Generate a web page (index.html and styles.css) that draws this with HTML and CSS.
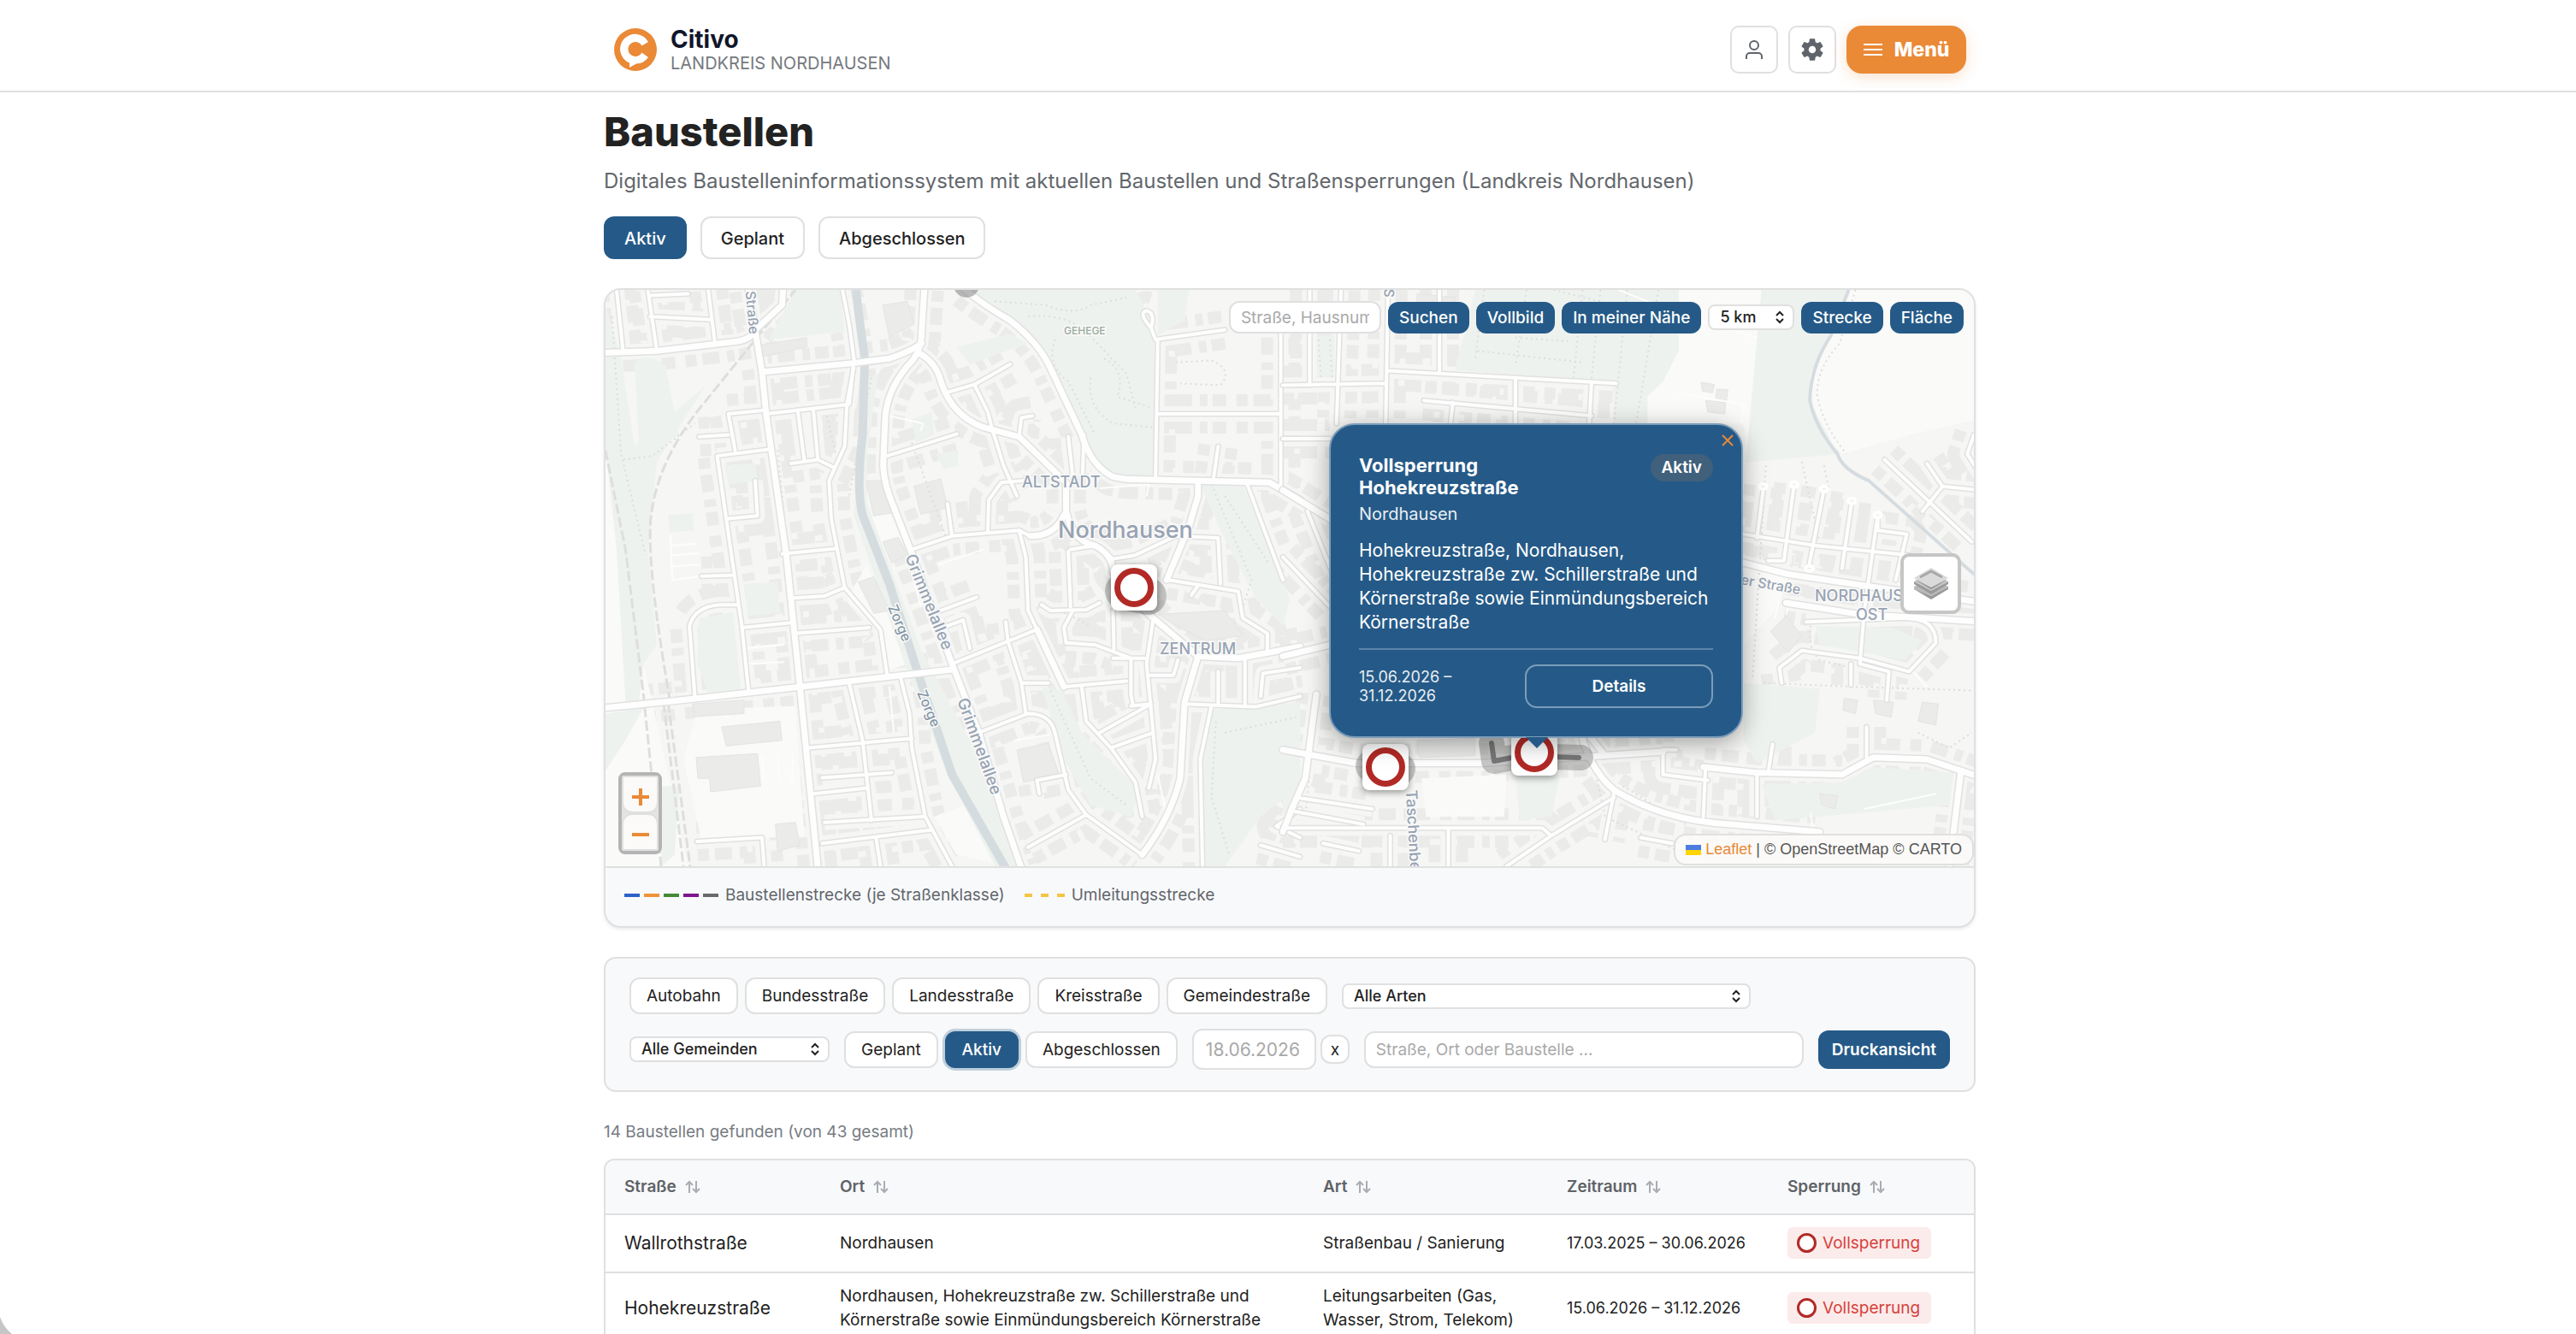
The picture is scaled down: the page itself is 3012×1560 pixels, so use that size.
FILE: index.html
```html
<!DOCTYPE html>
<html lang="de">
<head>
<meta charset="utf-8">
<meta name="viewport" content="width=device-width, initial-scale=1">
<title>Baustellen – Citivo Landkreis Nordhausen</title>
<link rel="stylesheet" href="styles.css">
</head>
<body>
<header class="site-header">
  <div class="header-inner">
    <a class="brand" href="#">
      <svg class="brand-logo" viewBox="0 0 50 50" aria-hidden="true">
        <circle cx="25" cy="25" r="25" fill="#ea8936"/>
        <path d="M40 16 A17.500 17.500 0 1 0 18 40.500 V46 L26 41.500 A17.500 17.500 0 0 0 40 34 L32.500 28.500 A8.500 8.500 0 1 1 32.500 20.500 Z" fill="#fff"/>
      </svg>
      <span class="brand-text">
        <span class="brand-name">Citivo</span>
        <span class="brand-sub">LANDKREIS NORDHAUSEN</span>
      </span>
    </a>
    <div class="header-actions">
      <button class="icon-btn" aria-label="Anmelden">
        <svg width="24" height="26" viewBox="0 0 24 26" fill="none" stroke="#5f656b" stroke-width="2"><circle cx="12" cy="8" r="5"/><path d="M3 24v-3a4 4 0 0 1 4-4h10a4 4 0 0 1 4 4v3"/></svg>
      </button>
      <button class="icon-btn" aria-label="Einstellungen">
        <svg width="32" height="32" viewBox="0 0 24 24" fill="#5f656b"><path d="M19.140 12.940c.04-.3.060-.61.060-.94s-.020-.64-.070-.94l2.030-1.580a.49.49 0 0 0 .12-.61l-1.920-3.320a.49.49 0 0 0-.59-.22l-2.390.96a7 7 0 0 0-1.620-.94l-.36-2.540a.48.48 0 0 0-.48-.41h-3.840a.48.48 0 0 0-.47.41l-.36 2.540a7.400 7.400 0 0 0-1.620.94l-2.390-.96a.48.48 0 0 0-.59.22L2.740 8.870a.48.48 0 0 0 .12.610l2.030 1.580a6 6 0 0 0 0 1.880l-2.030 1.580a.49.49 0 0 0-.12.610l1.920 3.320c.12.220.37.290.59.220l2.390-.96c.5.380 1.030.7 1.620.94l.36 2.540c.05.240.24.410.48.410h3.840c.24 0 .44-.17.470-.41l.36-2.540a7.400 7.400 0 0 0 1.620-.94l2.390.96c.22.080.47 0 .59-.22l1.920-3.320a.48.48 0 0 0-.12-.61zM12 15.200a3.200 3.200 0 1 1 0-6.400 3.200 3.200 0 0 1 0 6.400z"/></svg>
      </button>
      <button class="menu-btn">
        <svg width="22" height="16" viewBox="0 0 22 16" stroke="#fff" stroke-width="2"><path d="M0 2h22M0 8h22M0 14h22"/></svg>
        Menü
      </button>
    </div>
  </div>
</header>

<main class="page">
  <h1>Baustellen</h1>
  <p class="lead">Digitales Baustelleninformationssystem mit aktuellen Baustellen und Straßensperrungen (Landkreis Nordhausen)</p>
  <nav class="tabs">
    <a class="tab active" href="#">Aktiv</a>
    <a class="tab" href="#">Geplant</a>
    <a class="tab" href="#">Abgeschlossen</a>
  </nav>

  <section class="map-card">
    <div class="map">
      <svg class="tiles" viewBox="0 0 1600 674" preserveAspectRatio="xMidYMid slice" aria-hidden="true">
        <defs>
          <!-- west half, streets with houses on both sides -->
          <g id="west">
            <path d="M40 20 55 185M110 20 130 180M115 90 250 98M115 35 200 30M245 20 260 160"/>
            <path d="M290 345 305 440M225 405 290 400M265 455 380 438M265 455 300 740 320 900 335 1070M290 345 375 335M375 345 560 320 570 212"/>
            <path d="M445 335 460 470M480 335 490 465M430 475 490 465 525 485"/>
            <path d="M545 20 560 110 572 212M570 225 555 320 550 430 515 520 520 620 550 800 630 910 645 1030"/>
            <path d="M285 620 355 612 350 520M410 712 530 698M430 828 505 822 550 800M320 905 430 892M435 920 605 905"/>
            <path d="M215 1085 203 900Q215 850 270 845H310M230 770 297 768"/>
            <path d="M675 1035 695 1130 700 1220 730 1400 790 1530M470 1220 700 1195M560 1050 590 1200 610 1410M480 1340 600 1325M500 1298 655 1285M505 1415 725 1400M500 1470 745 1435M620 1455 630 1530M220 1465 365 1455 370 1530"/>
            <path d="M645 455 700 435 800 398M700 700 790 665 940 650 965 665M790 665 780 580M870 655 872 570 900 525 950 520M880 385 905 480 935 560"/>
            <path d="M775 290 840 268 920 215M840 268 870 340 880 385M940 405 945 355 970 350M1050 405 1060 510M1085 400 1082 500"/>
            <path d="M940 650 955 720 960 860 980 910M790 1000 980 910M765 860 845 825M780 900 815 885 830 960M910 890 915 940 945 1050 1005 1050M945 1050 955 1130"/>
            <path d="M850 1180 960 1130Q1010 1130 1020 1180L1050 1330 1090 1395M985 1340 980 1305 1045 1290M960 1480 1090 1395 1215 1500"/>
            <path d="M1050 705 1055 850M1055 700 1110 690 1150 725 1200 715 1290 665 1385 670 1390 790M1275 780 1430 810 1440 880 1495 920 1495 970M1325 820 1340 795"/>
            <path d="M990 845 1010 860 1090 858 1120 840M1045 945 1040 905 1060 860M1045 945 1110 950 1190 985 1190 1080 1195 1110M1150 860 1152 960M1240 880 1225 1000 1235 1120 1245 1250 1230 1325M1150 985H1220M1190 1110 1235 1105 1120 1180"/>
            <path d="M1040 1060 1180 1045M1080 1060 1090 1150 1145 1220 1200 1310 1215 1400M1145 1220 1240 1180M1230 1030H1285L1295 990"/>
            <path d="M1385 1020V1105M1445 990V1110M1310 1105 1470 1112 1568 1085M1480 1085 1485 1025 1568 1010M1370 1110 1345 1250 1350 1530M1568 1380 1515 1425 1568 1455M1480 1475 1568 1505"/>
            <path d="M1245 150 1400 125M1250 150 1245 510M1250 345H1525M1525 100V540M1525 270H1568M1530 410H1568M1385 430 1375 510M1450 530 1530 780M1245 150 1235 120Q1205 80 1225 75 1245 80 1235 120"/>
          </g>
          <g id="west-main">
            <path d="M728 20 722 130Q722 185 690 220 640 290 640 370L636 480Q638 530 660 590L700 710 790 1000 850 1180 905 1400 945 1535"/>
            <path d="M365 235 570 212 650 200Q700 180 722 160"/>
            <path d="M335 20 365 235 375 350 420 720 450 1060 490 1535"/>
            <path d="M15 185 130 180 310 155Q340 150 350 125L410 60 412 20M15 1115 160 1098 450 1060 790 1015"/>
            <path d="M820 20Q860 60 920 100 985 160 1010 225L1080 400Q1100 480 1150 510L1180 516 1500 525 1568 570"/>
            <path d="M715 185Q755 210 765 260 790 350 860 380L940 405 1045 525V600Q1060 680 1110 690 1150 715 1150 760L1230 870 1340 980 1430 985 1568 955"/>
            <path d="M1340 520V560L1320 640 1270 780M1340 980 1310 1100 1300 1300Q1280 1400 1215 1500M965 665Q1020 665 1040 610M980 910 1040 1060"/>
          </g>
          <!-- east half -->
          <g id="east">
            <path d="M0 270 230 265M130 20 120 370M235 20 230 370M235 232 745 265M315 310 690 350M350 20V235M380 315 375 370M520 250V370M690 265 685 370M0 410H105"/>
            <path d="M55 600 110 760M0 720 105 850M60 20V270"/>
            <path d="M1030 660 1190 690 1400 715M1075 535 1060 670M1143 530 1120 730H1085M1210 542 1175 750M1272 573 1250 750M1330 610V650L1395 660 1370 780M1330 610 1300 860 1290 1000 1355 1020 1350 1095"/>
            <path d="M1545 400 1530 450 1568 520M1345 465 1540 680M1430 600 1475 535 1560 545M1440 475 1475 535M1270 1055V1000"/>
            <path d="M1115 1050 1110 1010 1160 965 1290 985 1400 1020 1460 945Q1460 880 1390 880L1170 890"/>
            <path d="M1305 1165V1245M1095 1210 1085 1285M940 1400 945 1270M850 1225H880M850 1225V1290L950 1305M370 1430V1530M240 1450V1530M740 1340 720 1460M1060 1285V1400M30 1350 200 1380M20 1385 180 1420M90 1470 170 1490"/>
            <path d="M0 1430 580 1430 600 1450 500 1530M600 1450 740 1350M800 1455 870 1470"/>
          </g>
          <g id="east-main">
            <path d="M1030 735 1130 765 1330 800 1568 840M1125 840 1290 870 1568 890"/>
            <path d="M0 545 105 620M0 980 105 950M0 1225 165 1260 440 1260 720 1240M75 1080 50 1300 20 1380 0 1440"/>
            <path d="M1060 1285 1250 1290 1320 1245 1440 1250 1568 1300M1515 1290 1490 1530M940 1270 1060 1285"/>
            <path d="M660 1150Q680 1270 740 1330 850 1410 1000 1420L1200 1440M660 1150 720 1240 850 1230"/>
          </g>
        </defs>
        <rect width="1600" height="674" fill="#f6f6f4"/>
        <g transform="matrix(.523 0 0 .4464 -8 -9)">
          <use href="#west" class="houses"/><use href="#west-main" class="houses"/>
          <use href="#west" class="yard"/><use href="#west-main" class="yard"/>
        </g>
        <g transform="matrix(.523 0 0 .4464 792 -9)">
          <use href="#east" class="houses"/><use href="#east-main" class="houses"/>
          <use href="#east" class="yard"/><use href="#east-main" class="yard"/>
        </g>

        <g transform="matrix(.523 0 0 .4464 -8 -9)">
          <g class="open">
            <path d="M15 440 40 560 100 1000 120 1100 200 1535 15 1535ZM220 1120 440 1110 460 1450 230 1465 190 1250ZM560 820 600 740 640 850 690 1000 640 1020 630 920 560 840ZM610 615 650 605 680 680 630 690ZM750 1400 820 1370 880 1520 800 1500Z"/>
            <path d="M1440 1215 1540 1240 1520 1350 1430 1310Z"/>
          </g>
          <g class="park">
            <path d="M15 60 50 200 80 430 240 270 130 470 110 700 130 950 100 1000 90 1100 60 1100 40 700 15 430ZM380 150 440 20 540 20 550 130Z"/>
            <path d="M80 210Q110 180 150 220L180 405 90 420ZM325 790 400 785 405 865 335 875ZM225 880 300 865 318 1065 245 1075 220 1000ZM155 610 210 605 213 650 160 655ZM280 480 350 475 355 520 290 530Z"/>
            <path d="M835 20H1200L1240 110 1245 400 1240 510 1150 505Q1110 470 1090 400L1020 225Q980 130 900 80ZM1250 20H1320L1310 100 1250 140ZM800 170 920 135 960 160 830 215Z"/>
            <path d="M1345 530 1440 530 1500 700 1545 830 1530 900 1470 830 1390 650ZM1370 1120 1568 1100V1320L1480 1400 1400 1530H1355L1345 1260ZM990 1060 1035 1070 1080 1180 1210 1330 1190 1400 1100 1370 1040 1250ZM15 1130 100 1115 60 1200 15 1280ZM140 1320 180 1320 170 1500 140 1530ZM755 450 800 440 805 480 770 490ZM700 360 745 340 750 400 710 420Z"/>
            <path d="M600 250 625 240 600 450 600 580 720 960 870 1290 950 1535H890L780 1290 690 1020 570 610Z"/>
          </g>
          <g class="block">
            <path d="M705 535 765 515 780 590 720 608ZM635 680 670 668 690 715 655 735ZM598 520H640L655 605 615 612ZM580 785 615 772 650 860 615 868ZM218 1245 355 1235 362 1320 250 1335 248 1300 222 1300ZM275 1165 405 1150 410 1200 285 1215ZM210 1105 325 1095V1130L215 1138ZM935 1225 1005 1208 1030 1290 950 1310ZM1250 870 1400 860 1440 925 1360 940 1290 900ZM395 1420 440 1415 450 1475 400 1490ZM635 60 690 50 705 110 650 145ZM360 165 465 145V170L365 195Z"/>
          </g>
          <path class="river" d="M575 20Q585 120 595 200L590 400Q575 540 590 610L650 790 710 1010 790 1290 910 1535"/>
          <g class="rail">
            <path d="M15 440 60 700 100 1080 140 1535M155 1100 205 1535M145 1100 190 1535M160 1100Q100 700 120 590 140 450 240 310L440 20"/>
          </g>
          <g class="trail">
            <path d="M30 90 50 450 105 715M55 465 120 455 215 370M885 50 1000 60Q1060 90 1100 60L1180 40M960 90Q1040 80 1090 130L1180 240 1200 330M1020 150Q1000 220 1050 260L1110 400M1100 250Q1090 330 1150 370L1240 380M1130 200Q1180 230 1160 300L1240 330M1290 210 1370 205Q1420 230 1390 270L1300 265M1370 530 1460 780 1440 850M1400 560 1500 740M1010 1070 1100 1300 1180 1370M1380 1150 1370 1350 1410 1500M1400 1180 1560 1140M1030 860 1100 900M610 250 560 560M400 440 430 800 450 1000M700 420 780 680M510 350 530 450"/>
          </g>
          <g class="path"><path d="M160 660 165 780 230 770M160 690 220 685M160 715 225 710M160 745 228 740M650 350 725 370 720 390M365 1240 370 1310M400 1235 405 1310M435 1230 432 1310M700 760 720 850M1120 540 1230 530 1225 560M650 1060 660 1180M320 960 415 950M325 1000 415 995M930 1200 1010 1185M1250 1290 1270 1400M860 700 760 740"/></g>
          <use href="#west" class="casing"/><use href="#west-main" class="casing main"/>
          <use href="#west" class="road"/><use href="#west-main" class="road main"/>
        </g>
        <g transform="matrix(.523 0 0 .4464 792 -9)">
          <path class="open" d="M885 20H1070L1040 470 1030 370H815V300L885 180ZM1265 20H1550V360L1400 400 1250 450 1190 370 1180 250 1225 140ZM1030 740 1130 770 1100 860 1030 950ZM310 1300 500 1290 495 1400 320 1400Z"/>
          <g class="park">
            <path d="M430 20H885V180L850 260 815 300V370H740V265L385 230ZM1070 20H1265L1225 140 1178 240V310L1240 450 1035 472Z"/>
            <path d="M1030 1050 1200 1065 1190 1180 1060 1260 1030 1200ZM1070 1315 1250 1310 1320 1270 1500 1285 1490 1370 1100 1410ZM1190 900 1360 905 1430 940 1390 990 1200 950ZM520 1290 620 1290 600 1400 530 1410ZM0 1290 40 1250 20 1370 0 1400Z"/>
            <path d="M75 140H115V250H75Z"/>
          </g>
          <path class="block" d="M1090 915 1125 875 1160 925 1130 970ZM945 310 990 315 988 345 950 340ZM935 262 965 268 960 290 938 285ZM970 280 995 282 992 310 968 305ZM1255 1090 1285 1095 1280 1130 1252 1122ZM1320 1095 1365 1100 1360 1140 1325 1130ZM1430 1100 1465 1105 1460 1160 1420 1150ZM300 1200 430 1195V1240L305 1245ZM1200 1340 1240 1345 1235 1380 1205 1370ZM300 30 385 40V70L300 60Z"/>
          <path class="stream" d="M1265 20 1225 140Q1180 220 1178 310 1190 380 1240 450 1250 490 1310 520L1550 770"/>
          <g class="trail">
            <path d="M450 20 430 200M545 20 520 220M605 20 740 60M670 20 650 250M710 20 690 255M770 20 740 370M840 20 790 370M435 180 670 210M520 145 640 155M1280 20 1245 160Q1190 230 1195 300 1210 380 1260 450M1080 480 1050 1040M1160 470 1200 680M1210 480 1220 540M1075 1050 1280 1060 1550 1070M1180 900Q1170 950 1200 990L1270 1010M700 1290 720 1400 900 1500M760 1320 900 1420M1420 1180 1490 1220 1540 1180M80 150 85 250M105 150 110 250M60 1280 50 1400"/>
          </g>
          <g class="path"><path d="M750 20 900 90 1060 145M885 290 1030 320 1025 370M1115 810 1100 880M1135 830 1125 870M1200 770 1320 790M1400 1010 1440 1060M1180 1390 1190 1480M1460 1340 1300 1380"/></g>
          <use href="#east" class="casing"/><use href="#east-main" class="casing main"/>
          <use href="#east" class="road"/><use href="#east-main" class="road main"/>
          <g class="bulb"><ellipse cx="1074" cy="535" rx="8" ry="7"/><ellipse cx="1143" cy="530" rx="8" ry="7"/><ellipse cx="1210" cy="542" rx="8" ry="7"/><ellipse cx="1272" cy="573" rx="8" ry="7"/><ellipse cx="1330" cy="610" rx="8" ry="7"/><ellipse cx="1177" cy="750" rx="8" ry="7"/></g>
        </g>

        <g class="labels">
          <text x="487" y="231" font-size="18">ALTSTADT</text>
          <text x="529" y="290" font-size="27">Nordhausen</text>
          <text x="648" y="426" font-size="18">ZENTRUM</text>
          <text x="536" y="52" font-size="12" class="green">GEHEGE</text>
          <text x="1414" y="364" font-size="18">NORDHAUSEN</text>
          <text x="1462" y="386" font-size="18">OST</text>
          <text transform="translate(350 312) rotate(68)" font-size="19">Grimmelallee</text>
          <text transform="translate(411 480) rotate(70)" font-size="19">Grimmelallee</text>
          <text transform="translate(330 371) rotate(67)" font-size="16" class="water">Zorge</text>
          <text transform="translate(364 471) rotate(67)" font-size="16" class="water">Zorge</text>
          <text transform="translate(162 -18) rotate(85)" font-size="16">er Straße</text>
          <text transform="translate(1327 344) rotate(10)" font-size="16">er Straße</text>
          <text transform="translate(936 585) rotate(87)" font-size="18">Taschenberg</text>
          <text transform="translate(911 -2) rotate(95)" font-size="16">S</text>
        </g>

        <circle cx="422" cy="-6" r="15" fill="#8c8c8c" fill-opacity=".6"/>
        <g fill="none" stroke-linecap="round" stroke-linejoin="round" stroke="#777">
          <path d="M606 352 634 358" stroke-width="44" stroke-opacity=".4"/>
          <path d="M896 557 928 560" stroke-width="38" stroke-opacity=".4"/>
          <path d="M1036 530 1039 551 1070 545 1140 547" stroke-width="30" stroke-opacity=".4"/>
          <path d="M1036 530 1039 551 1070 545 1138 547" stroke-width="6"/>
        </g>
      </svg>

      <button class="marker marker-a" aria-label="Vollsperrung Zentrum"></button>
      <button class="marker marker-b" aria-label="Vollsperrung Taschenberg"></button>
      <button class="marker marker-c" aria-label="Vollsperrung Hohekreuzstraße"></button>

      <div class="map-tools">
        <input class="field tool-search" type="text" placeholder="Straße, Hausnummer" aria-label="Adresse">
        <button class="tool">Suchen</button>
        <button class="tool">Vollbild</button>
        <button class="tool">In meiner Nähe</button>
        <select class="select tool-radius" aria-label="Umkreis"><option>5 km</option></select>
        <button class="tool">Strecke</button>
        <button class="tool">Fläche</button>
      </div>

      <article class="popup">
        <button class="popup-close" aria-label="Schließen"><svg width="14" height="14" viewBox="0 0 14 14" stroke="#ea8936" stroke-width="2"><path d="M1 1l12 12M13 1L1 13"/></svg></button>
        <div class="popup-head">
          <div>
            <h2>Vollsperrung<br>Hohekreuzstraße</h2>
            <p class="popup-place">Nordhausen</p>
          </div>
          <span class="status">Aktiv</span>
        </div>
        <p class="popup-desc">Hohekreuzstraße, Nordhausen,<br>Hohekreuzstraße zw. Schillerstraße und<br>Körnerstraße sowie Einmündungsbereich<br>Körnerstraße</p>
        <div class="popup-foot">
          <span class="popup-dates">15.06.2026 –<br>31.12.2026</span>
          <a class="details" href="#">Details</a>
        </div>
      </article>

      <button class="layers" aria-label="Kartenebenen">
        <svg width="40" height="40" viewBox="0 0 40 40"><path d="M0 26 20 38 40 26V23L20 34 0 23Z" fill="#9a9a9a"/><path d="M0 26V23L8 19H32L40 23 20 34Z" fill="#b9b9b9"/><path d="M0 20 20 32 40 20V17L20 28 0 17Z" fill="#9a9a9a"/><path d="M0 17 6 14H34L40 17 20 28Z" fill="#c4c4c4"/><path d="M0 14 20 26 40 14 20 24Z" fill="#8d8d8d"/><path d="M0 13 20 1 40 13 20 24Z" fill="#dadada"/><path d="M7 12 20 5 33 12" fill="none" stroke="#a8a8a8" stroke-width="3"/></svg>
      </button>
      <div class="zoom">
        <button aria-label="Vergrößern"><svg width="20" height="20" viewBox="0 0 20 20" stroke="#ea8936" stroke-width="4"><path d="M0 10h20M10 0v20"/></svg></button>
        <button aria-label="Verkleinern"><svg width="20" height="20" viewBox="0 0 20 20" stroke="#ea8936" stroke-width="4"><path d="M0 10h20"/></svg></button>
      </div>
      <div class="attribution">
        <svg width="18" height="12" viewBox="0 0 18 12"><path d="M0 0h18v6H0z" fill="#4c7be1"/><path d="M0 6h18v6H0z" fill="#ffd500"/></svg>
        <a href="#">Leaflet</a> <span>| © OpenStreetMap © CARTO</span>
      </div>
    </div>
    <div class="legend">
      <span class="legend-item"><span class="swatches"><i class="blue"></i><i class="orange"></i><i class="green"></i><i class="purple"></i><i class="grey"></i></span>Baustellenstrecke (je Straßenklasse)</span>
      <span class="legend-item"><span class="swatches detour"><i></i><i></i><i></i></span>Umleitungsstrecke</span>
    </div>
  </section>

  <form class="filters">
    <div class="filter-row">
      <div class="chips">
        <button type="button" class="chip">Autobahn</button>
        <button type="button" class="chip">Bundesstraße</button>
        <button type="button" class="chip">Landesstraße</button>
        <button type="button" class="chip">Kreisstraße</button>
        <button type="button" class="chip">Gemeindestraße</button>
      </div>
      <select class="select kind" aria-label="Art"><option>Alle Arten</option></select>
    </div>
    <div class="filter-row">
      <select class="select town" aria-label="Gemeinde"><option>Alle Gemeinden</option></select>
      <div class="chips">
        <button type="button" class="chip">Geplant</button>
        <button type="button" class="chip active">Aktiv</button>
        <button type="button" class="chip">Abgeschlossen</button>
      </div>
      <div class="date-group">
        <input class="field date" type="text" value="18.06.2026" aria-label="Datum">
        <button type="button" class="chip clear" aria-label="Datum löschen">x</button>
      </div>
      <input class="field query" type="text" placeholder="Straße, Ort oder Baustelle …" aria-label="Suche">
      <button type="button" class="print">Druckansicht</button>
    </div>
  </form>

  <p class="count">14 Baustellen gefunden (von 43 gesamt)</p>

  <div class="table-card">
    <table>
      <colgroup><col class="c-street"><col class="c-place"><col class="c-kind"><col class="c-time"><col class="c-block"></colgroup>
      <thead>
        <tr>
          <th>Straße <svg class="sort" viewBox="0 0 18 16"><path d="M5 15V2M1 6l4-4 4 4M13 1v13M9 10l4 4 4-4"/></svg></th>
          <th>Ort <svg class="sort" viewBox="0 0 18 16"><path d="M5 15V2M1 6l4-4 4 4M13 1v13M9 10l4 4 4-4"/></svg></th>
          <th>Art <svg class="sort" viewBox="0 0 18 16"><path d="M5 15V2M1 6l4-4 4 4M13 1v13M9 10l4 4 4-4"/></svg></th>
          <th>Zeitraum <svg class="sort" viewBox="0 0 18 16"><path d="M5 15V2M1 6l4-4 4 4M13 1v13M9 10l4 4 4-4"/></svg></th>
          <th>Sperrung <svg class="sort" viewBox="0 0 18 16"><path d="M5 15V2M1 6l4-4 4 4M13 1v13M9 10l4 4 4-4"/></svg></th>
        </tr>
      </thead>
      <tbody>
        <tr>
          <td class="street">Wallrothstraße</td><td>Nordhausen</td><td>Straßenbau / Sanierung</td><td class="time">17.03.2025 – 30.06.2026</td>
          <td><span class="badge"><i></i>Vollsperrung</span></td>
        </tr>
        <tr>
          <td class="street">Hohekreuzstraße</td><td>Nordhausen, Hohekreuzstraße zw. Schillerstraße und<br>Körnerstraße sowie Einmündungsbereich Körnerstraße</td><td>Leitungsarbeiten (Gas,<br>Wasser, Strom, Telekom)</td><td class="time">15.06.2026 – 31.12.2026</td>
          <td><span class="badge"><i></i>Vollsperrung</span></td>
        </tr>
      </tbody>
    </table>
  </div>
</main>
<svg class="window-corner" width="14" height="20" viewBox="0 0 14 20" aria-hidden="true"><path d="M0 0Q4 12 14 20H0Z" fill="#c6c6c6"/></svg>
</body>
</html>
```
FILE: styles.css
```css
:root {
  --blue: #255a88;
  --orange: #ea8936;
  --line: #e0e0e0;
  --panel: #f8f9fb;
  --text: #222;
  --muted: #63676c;
}
*, *::before { box-sizing: border-box; }
body {
  margin: 0;
  background: #fff;
  color: var(--text);
  font-family: Inter, "Liberation Sans", sans-serif;
  font-size: 19px;
  overflow-x: hidden;
}
h1, h2, p { margin: 0; }
a { color: inherit; text-decoration: none; }
button, input, select { font: inherit; color: inherit; margin: 0; }
button { cursor: pointer; }

.site-header { border-bottom: 2px solid var(--line); padding-left: 4px; }
.header-inner {
  max-width: 1604px;
  height: 106px;
  margin: 0 auto;
  padding: 10px 11px 0 12px;
  display: flex;
  align-items: center;
  justify-content: space-between;
}
.brand { display: flex; align-items: center; gap: 16px; }
.brand-logo { width: 50px; height: 50px; }
.brand-text { display: flex; flex-direction: column; }
.brand-name { font-size: 28px; font-weight: 700; line-height: 32px; color: #10162b; }
.brand-sub { font-size: 20px; line-height: 24px; color: #757a80; }
.header-actions { display: flex; gap: 12px; }
.icon-btn, .menu-btn { display: flex; align-items: center; justify-content: center; height: 56px; }
.icon-btn { width: 56px; padding: 0; background: #fff; border: 2px solid var(--line); border-radius: 10px; }
.menu-btn {
  width: 140px;
  padding: 0;
  gap: 14px;
  border: 0;
  border-radius: 18px;
  background: var(--orange);
  color: #fff;
  font-size: 23px;
  font-weight: 800;
  box-shadow: 0 4px 16px rgba(234, 137, 54, .25);
}

.page { max-width: 1608px; margin: 0 auto; padding-left: 4px; }
h1 { font-size: 47px; line-height: 56px; font-weight: 800; margin-top: 18px; }
.lead { margin-top: 16px; font-size: 24px; line-height: 28px; color: var(--muted); }
.tabs { display: flex; gap: 16px; margin-top: 27px; }
.tab {
  height: 50px;
  padding: 0 22px;
  border: 2px solid var(--line);
  border-radius: 12px;
  font-size: 20px;
  font-weight: 500;
  line-height: 48px;
}
.tab.active { background: var(--blue); border-color: var(--blue); color: #fff; }

.map-card {
  margin-top: 34px;
  border: 2px solid var(--line);
  border-radius: 20px;
  overflow: hidden;
  background: var(--panel);
  box-shadow: 0 2px 4px rgba(0, 0, 0, .08);
}
.map { position: relative; height: 674px; overflow: hidden; }
.tiles { display: block; width: 100%; height: 100%; }
.tiles path, .bulb ellipse { vector-effect: non-scaling-stroke; }
.houses, .yard, .casing, .road, .rail, .trail, .path, .river, .stream { fill: none; stroke-linejoin: round; }
.houses { stroke: #ebebea; stroke-width: 46; stroke-dasharray: 13 7 20 9 9 6 16 12; }
.yard { stroke: #f6f6f4; stroke-width: 18; }
.casing { stroke: #e1e1e0; stroke-width: 7; stroke-linecap: round; }
.casing.main { stroke-width: 10; }
.road { stroke: #fefefe; stroke-width: 4; stroke-linecap: round; }
.road.main { stroke-width: 7; }
.open { fill: #fafaf8; }
.park { fill: #eef2ef; }
.block { fill: #ebebea; stroke: #e4e4e4; stroke-width: 1; }
.river { stroke: #d5dcdf; stroke-width: 10; }
.stream { stroke: #d5dce0; stroke-width: 4; }
.rail { stroke: #dededd; stroke-width: 3; stroke-dasharray: 12 4; }
.trail { stroke: #dcdddc; stroke-width: 2; stroke-dasharray: 2 4; }
.path { stroke: #fdfdfd; stroke-width: 2; }
.bulb { fill: #f0f0f0; stroke: #fff; stroke-width: 4; }
.labels { fill: #97a3b3; stroke: #fafafa; stroke-width: 3; paint-order: stroke; font-weight: 500; }
.labels .green { fill: #98ab9b; }
.labels .water { fill: #8496a5; }

.marker {
  position: absolute;
  width: 54px;
  height: 54px;
  padding: 4px;
  border: 0;
  border-radius: 8px;
  background: #fff;
  box-shadow: 0 2px 8px rgba(0, 0, 0, .45);
}
.marker::before {
  content: "";
  display: block;
  height: 46px;
  border: 7px solid #b12a26;
  border-radius: 50%;
}
.marker-a { left: 591px; top: 321px; }
.marker-b { left: 885px; top: 531px; }
.marker-c { left: 1059px; top: 514px; }

.map-tools { position: absolute; top: 13px; right: 12px; display: flex; align-items: center; gap: 8px; }
.field { background: #fff; border: 2px solid var(--line); outline: 0; }
.field::placeholder { color: #a9a9a9; opacity: 1; }
.select {
  appearance: none;
  background: #fff url("data:image/svg+xml,%3Csvg xmlns='http://www.w3.org/2000/svg' width='10' height='16' viewBox='0 0 10 16' fill='none' stroke='%23222' stroke-width='2'%3E%3Cpath d='M1 6l4-4 4 4M1 10l4 4 4-4'/%3E%3C/svg%3E") no-repeat right 10px center;
  border: 2px solid var(--line);
  border-radius: 8px;
  height: 30px;
  padding: 0 12px;
  font-size: 18px;
  font-weight: 500;
  line-height: 24px;
}
.tool-search { width: 178px; height: 38px; padding: 0 12px; border-radius: 12px; }
.tool {
  height: 37px;
  padding: 0 13px;
  border: 0;
  border-radius: 12px;
  background: var(--blue);
  color: #fff;
  font-weight: 500;
  white-space: nowrap;
}
.tool-radius { width: 101px; }

.popup {
  position: absolute;
  left: 846px;
  top: 156px;
  width: 484px;
  height: 368px;
  padding: 34px 33px;
  border: 2px solid #7c9dba;
  border-radius: 30px;
  background: var(--blue);
  color: #fff;
  box-shadow: 0 6px 28px rgba(0, 0, 0, .35);
}
.popup::after {
  content: "";
  position: absolute;
  left: 228px;
  top: 365px;
  border: 13px solid transparent;
  border-top-color: var(--blue);
  border-bottom: 0;
}
.popup-close { position: absolute; right: 9px; top: 11px; padding: 0; border: 0; background: none; line-height: 0; }
.popup-head { display: flex; justify-content: space-between; align-items: flex-start; }
h2 { font-size: 22px; line-height: 26px; font-weight: 700; }
.popup-place { margin-top: 7px; line-height: 22px; font-size: 20px; opacity: .9; }
.status { background: #40607b; border-radius: 16px; padding: 0 13px; line-height: 32px; font-weight: 600; }
.popup-desc { margin-top: 18px; line-height: 28px; font-size: 21px; font-weight: 400; white-space: nowrap; }
.popup-foot {
  margin-top: 16px;
  padding-top: 17px;
  border-top: 2px solid #5d84a8;
  display: flex;
  justify-content: space-between;
  align-items: center;
}
.popup-dates { font-size: 18px; line-height: 22px; opacity: .9; }
.details {
  width: 220px;
  height: 51px;
  border: 2px solid #7c9dba;
  border-radius: 14px;
  text-align: center;
  line-height: 47px;
  font-weight: 600;
}

.layers {
  position: absolute;
  right: 15px;
  top: 308px;
  width: 71px;
  height: 71px;
  padding: 0;
  display: flex;
  align-items: center;
  justify-content: center;
  border: 4px solid #c6c6c6;
  border-radius: 10px;
  background: #fff;
}
.zoom {
  position: absolute;
  left: 15px;
  bottom: 14px;
  width: 51px;
  display: flex;
  flex-direction: column;
  border: 4px solid #b4b4b4;
  border-radius: 8px;
  background: #e4e4e4;
}
.zoom button {
  height: 44px;
  display: flex;
  align-items: center;
  justify-content: center;
  padding: 6px 0 0;
  border: 2px solid var(--line);
  background: #fbfaf9;
}
.zoom button:first-child { border-radius: 2px 2px 12px 12px; }
.zoom button:last-child { border-radius: 12px 12px 2px 2px; }
.attribution {
  position: absolute;
  right: 0;
  bottom: 1px;
  height: 37px;
  padding: 0 12px;
  display: flex;
  align-items: center;
  gap: 5px;
  border: 2px solid var(--line);
  border-radius: 14px;
  background: rgba(252, 251, 248, .88);
  color: #555;
  font-family: "Liberation Sans", Arial, sans-serif;
  font-size: 18px;
}
.attribution a { color: var(--orange); }

.legend {
  display: flex;
  gap: 23px;
  padding: 20px 22px 24px;
  border-top: 2px solid var(--line);
  color: var(--muted);
  line-height: 24px;
}
.legend-item { display: flex; align-items: center; gap: 8px; }
.swatches { display: flex; gap: 5px; }
.swatches i { width: 18px; height: 4px; }
.swatches.detour { gap: 10px; }
.swatches.detour i { width: 9px; background: #f4c542; }
.blue { background: #2a62c9; }
.orange { background: #f19237; }
.swatches .green { background: #438a34; }
.purple { background: #7d168c; }
.grey { background: #696969; }

.filters {
  margin-top: 34px;
  padding: 22px 28px 24px;
  display: flex;
  flex-direction: column;
  gap: 17px;
  border: 2px solid var(--line);
  border-radius: 14px;
  background: var(--panel);
}
.filter-row { display: flex; align-items: center; gap: 17px; }
.chips { display: flex; gap: 8px; }
.chip { height: 43px; padding: 0 18px; border: 2px solid var(--line); border-radius: 12px; background: #fff; }
.chip.active { background: var(--blue); border-color: var(--blue); color: #fff; font-weight: 500; box-shadow: 0 0 0 3px #bfcfdc; }
.kind { width: 478px; }
.town { width: 234px; }
.date-group { display: flex; align-items: center; gap: 5px; }
.date { width: 145px; height: 48px; border-radius: 12px; padding: 0 14px; font-size: 21px; color: #a9a9a9; }
.clear { width: 34px; height: 34px; padding: 0; }
.query { flex: 1; min-width: 0; height: 43px; padding: 0 12px; border-radius: 12px; }
.print { height: 45px; padding: 0 16px; border: 0; border-radius: 12px; background: var(--blue); color: #fff; font-weight: 600; }

.count { margin-top: 35px; line-height: 24px; color: #777c82; }

.table-card { margin-top: 19px; border: 2px solid var(--line); border-radius: 12px; overflow: hidden; }
table { width: 100%; border-collapse: collapse; table-layout: fixed; }
.c-street { width: 252px; }
.c-place { width: 565px; }
.c-kind { width: 285px; }
.c-time { width: 258px; }
th, td { padding: 13px 22px; text-align: left; vertical-align: middle; white-space: nowrap; line-height: 28px; }
th { height: 63px; background: var(--panel); color: #5f6368; font-weight: 600; border-bottom: 2px solid var(--line); }
td { height: 68px; border-bottom: 2px solid var(--line); }
.street { font-size: 21px; }
.time { font-size: 18px; }
.sort { width: 18px; height: 16px; margin-left: 5px; vertical-align: -2px; fill: none; stroke: #a9acb0; stroke-width: 2; }
.badge {
  display: inline-flex;
  align-items: center;
  gap: 7px;
  height: 37px;
  padding: 0 13px 0 11px;
  border-radius: 6px;
  background: #fcebeb;
  color: #d6423b;
}
.badge i { width: 23px; height: 23px; border: 3px solid #b12a26; border-radius: 50%; background: #fff; }

.window-corner { position: fixed; left: 0; bottom: 0; }
```
